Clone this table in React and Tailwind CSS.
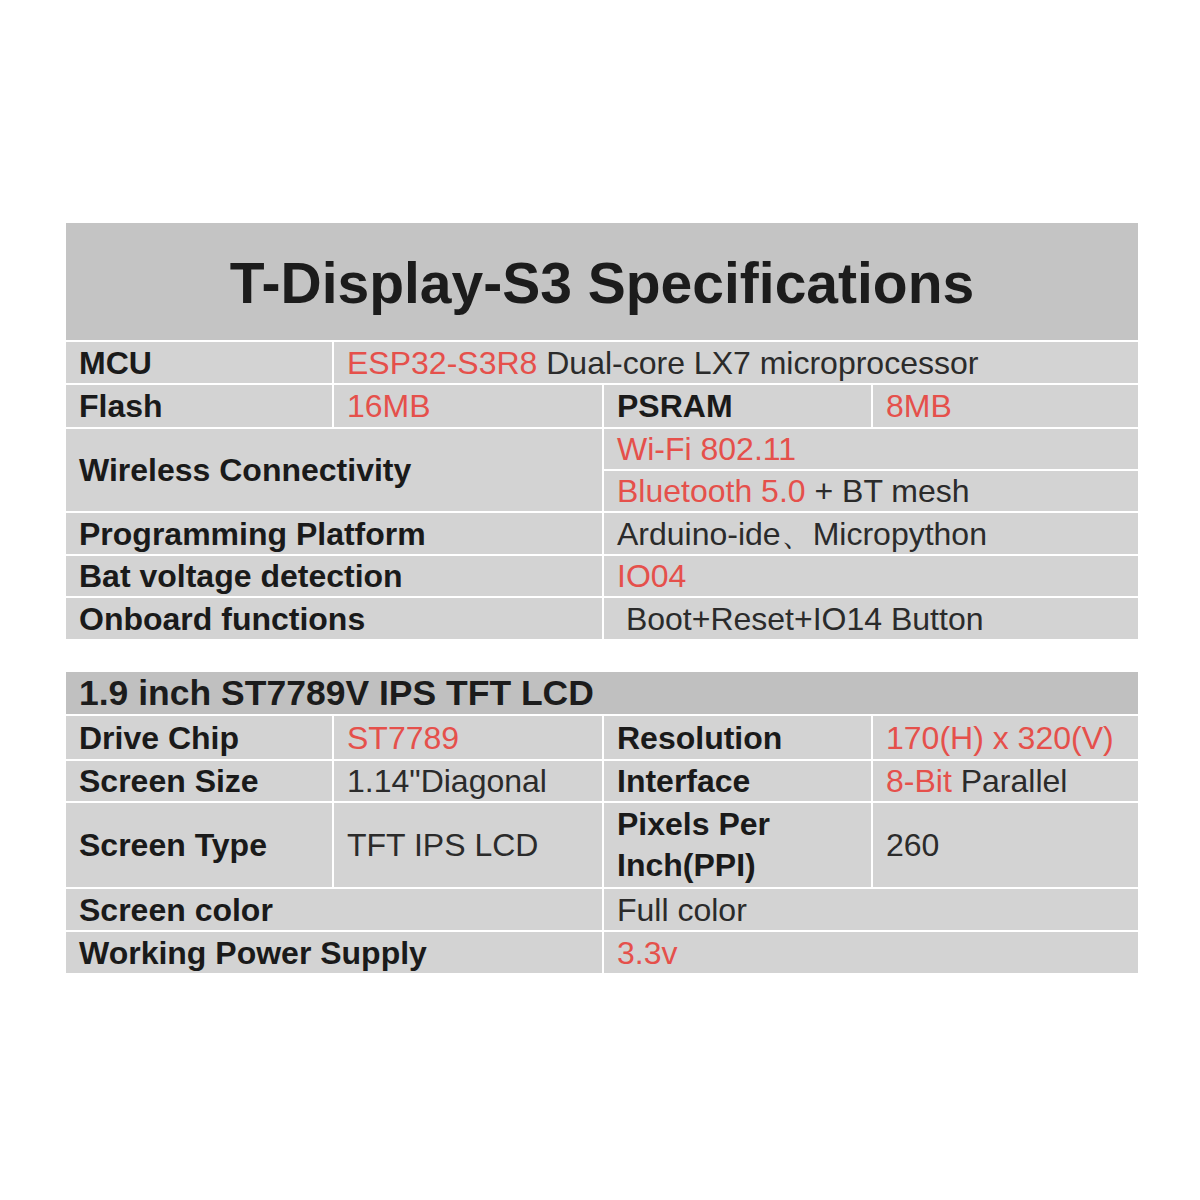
const red = 'text-[#e5504b]';

function L({ children, colSpan, rowSpan, lh }) {
  return (
    <td colSpan={colSpan} rowSpan={rowSpan} className={`border-2 border-white bg-[#d3d3d3] px-[13px] py-0 align-middle text-[32px] font-bold text-[#1a1a1a] ${lh || 'leading-[38px]'}`}>
      {children}
    </td>
  );
}

function V({ children, colSpan, rowSpan }) {
  return (
    <td colSpan={colSpan} rowSpan={rowSpan} className="border-2 border-white bg-[#d3d3d3] px-[13px] py-0 align-middle text-[32px] leading-[38px] text-[#2b2b2b]">
      {children}
    </td>
  );
}

function Cols() {
  return (
    <colgroup>
      <col className="w-[268px]" />
      <col className="w-[270px]" />
      <col className="w-[269px]" />
      <col className="w-[267px]" />
    </colgroup>
  );
}

export default function App() {
  return (
    <div className="min-h-[1200px] w-[1200px] bg-white pt-[221px] font-['Liberation_Sans',Arial,sans-serif]">
      <div className="ml-[64px] w-[1076px]">
        <table className="w-full table-fixed border-collapse">
          <Cols />
          <tbody>
            <tr className="h-[119px]">
              <td colSpan={4} className="border-2 border-white bg-[#c4c4c4] pt-[4px] text-center align-middle text-[57px] font-bold text-[#1c1c1c]">
                T-Display-S3 Specifications
              </td>
            </tr>
            <tr className="h-[43px]">
              <L>MCU</L>
              <V colSpan={3}><span className={red}>ESP32-S3R8</span> Dual-core LX7 microprocessor</V>
            </tr>
            <tr className="h-[44px]">
              <L>Flash</L>
              <V><span className={red}>16MB</span></V>
              <L>PSRAM</L>
              <V><span className={red}>8MB</span></V>
            </tr>
            <tr className="h-[42px]">
              <L colSpan={2} rowSpan={2}>Wireless Connectivity</L>
              <V colSpan={2}><span className={red}>Wi-Fi 802.11</span></V>
            </tr>
            <tr className="h-[42px]">
              <V colSpan={2}><span className={red}>Bluetooth 5.0</span> + BT mesh</V>
            </tr>
            <tr className="h-[43px]">
              <L colSpan={2}>Programming Platform</L>
              <V colSpan={2}>Arduino-ide、Micropython</V>
            </tr>
            <tr className="h-[42px]">
              <L colSpan={2}>Bat voltage detection</L>
              <V colSpan={2}><span className={red}>IO04</span></V>
            </tr>
            <tr className="h-[43px]">
              <L colSpan={2}>Onboard functions</L>
              <V colSpan={2}>&nbsp;Boot+Reset+IO14 Button</V>
            </tr>
          </tbody>
        </table>

        <table className="mt-[29px] w-full table-fixed border-collapse">
          <Cols />
          <tbody>
            <tr className="h-[44px]">
              <td colSpan={4} className="border-2 border-white bg-[#c0c0c0] px-[13px] align-middle text-[35.5px] font-bold leading-[40px] text-[#1c1c1c]">
                1.9 inch ST7789V IPS TFT LCD
              </td>
            </tr>
            <tr className="h-[45px]">
              <L>Drive Chip</L>
              <V><span className={red}>ST7789</span></V>
              <L>Resolution</L>
              <V><span className={red}>170(H) x 320(V)</span></V>
            </tr>
            <tr className="h-[42px]">
              <L>Screen Size</L>
              <V>1.14"Diagonal</V>
              <L>Interface</L>
              <V><span className={red}>8-Bit</span> Parallel</V>
            </tr>
            <tr className="h-[86px]">
              <L>Screen Type</L>
              <V>TFT IPS LCD</V>
              <L lh="leading-[41px]">Pixels Per<br />Inch(PPI)</L>
              <V>260</V>
            </tr>
            <tr className="h-[43px]">
              <L colSpan={2}>Screen color</L>
              <V colSpan={2}>Full color</V>
            </tr>
            <tr className="h-[43px]">
              <L colSpan={2}>Working Power Supply</L>
              <V colSpan={2}><span className={red}>3.3v</span></V>
            </tr>
          </tbody>
        </table>
      </div>
    </div>
  );
}
